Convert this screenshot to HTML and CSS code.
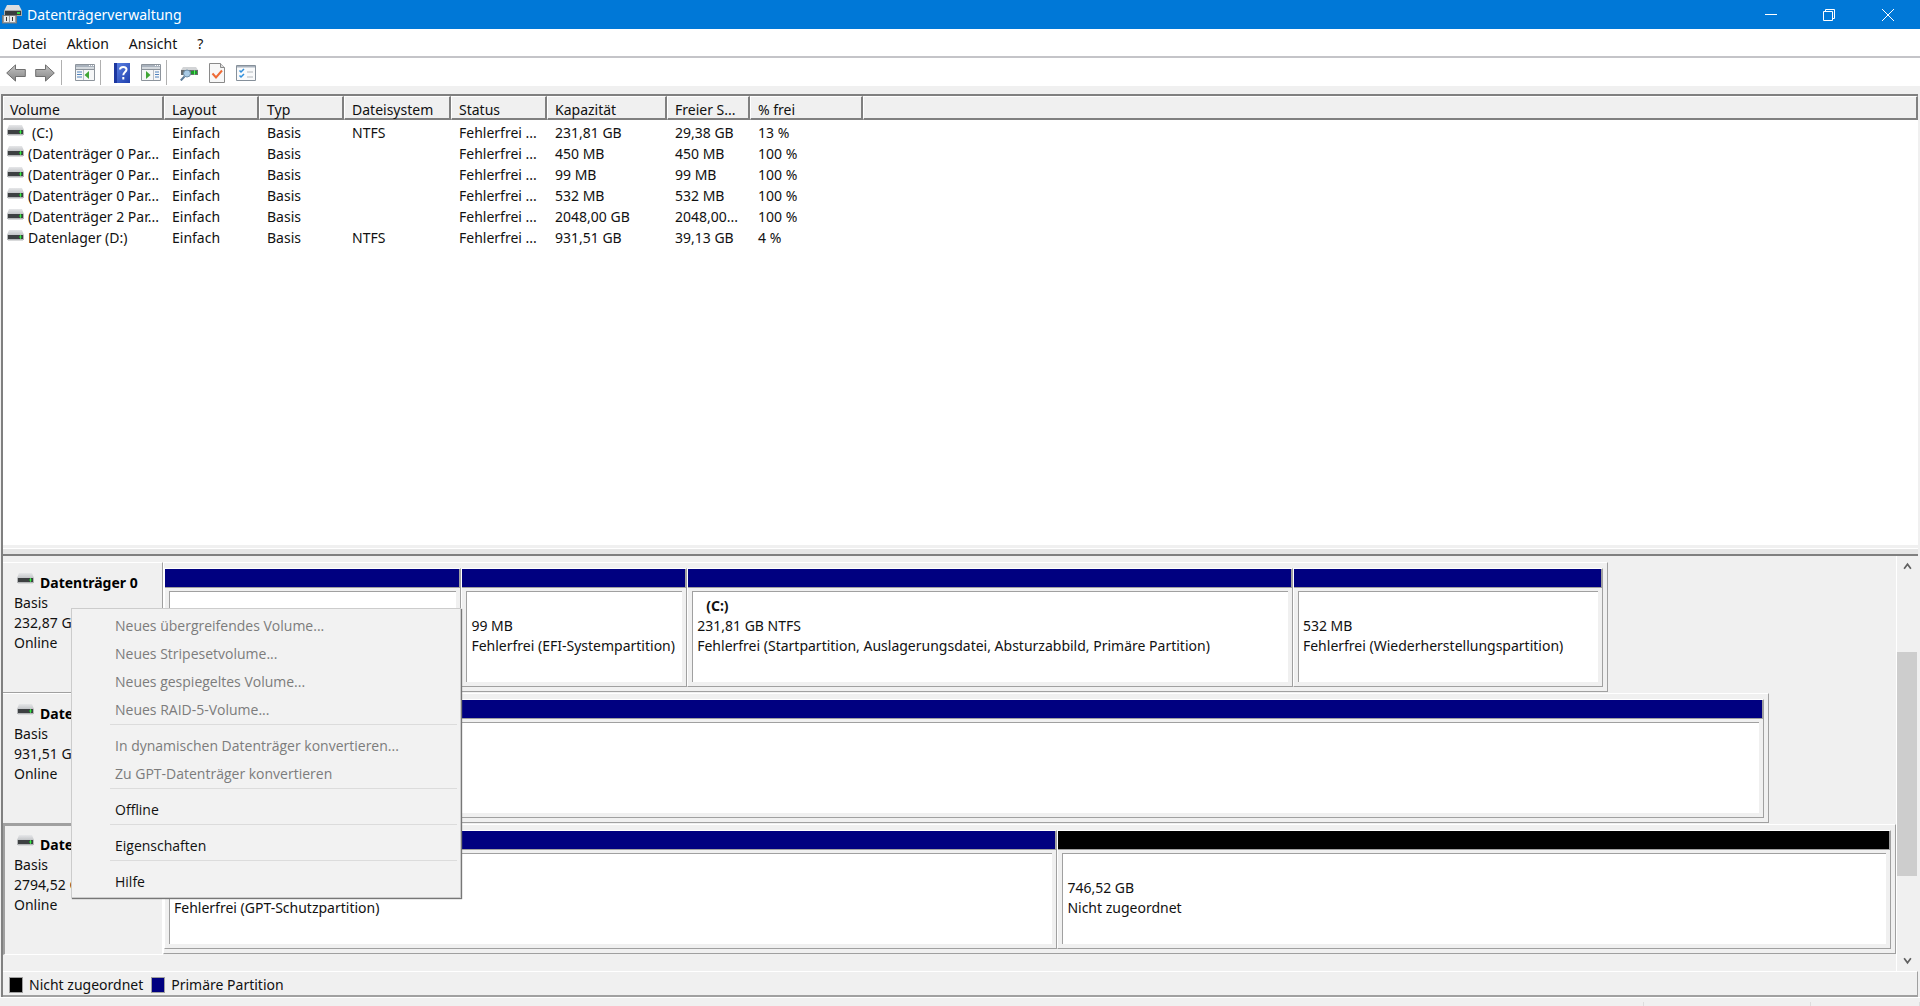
FILE: index.html
```html
<!DOCTYPE html>
<html lang="de">
<head>
<meta charset="utf-8">
<title>Datenträgerverwaltung</title>
<link rel="stylesheet" href="styles.css">
</head>
<body>
<svg class="sprite" aria-hidden="true">
  <defs>
    <linearGradient id="lid" x1="0" y1="0" x2="0" y2="1"><stop offset="0" stop-color="#e6e7e9"/><stop offset="1" stop-color="#c3c5c8"/></linearGradient>
    <linearGradient id="steel" x1="0" y1="0" x2="0" y2="1"><stop offset="0" stop-color="#c4c4c4"/><stop offset="1" stop-color="#858585"/></linearGradient>
    <linearGradient id="book" x1="0" y1="0" x2="1" y2="1"><stop offset="0" stop-color="#5f85e6"/><stop offset="1" stop-color="#1f3fae"/></linearGradient>
  </defs>
  <symbol id="drive" viewBox="0 0 17 12">
    <path d="M2 0h13l2 5H0z" fill="url(#lid)"/>
    <path d="M0 5h17v5H0z" fill="#b4b6b8"/>
    <path d="M1 5h15v4H1z" fill="#3d4042"/>
    <path d="M12 6h3v2h-3z" fill="#1f8f2a"/><path d="M13 5h1v4h-1z" fill="#3fe04a"/>
    <path d="M1 10h15v1H1z" fill="#d9dadb"/>
  </symbol>
  <symbol id="panel" viewBox="0 0 20 17">
    <path d="M.5.5h19v16H.5z" fill="#f6f7f8" stroke="#8d949c"/>
    <path d="M1 1h18v2H1z" fill="#a9b2bd"/><path d="M1 3h18v2H1z" fill="#d4d9de"/>
    <path d="M0 5h20v1H0z" fill="#8d949c"/>
    <path d="M14 1h1v1h-1zM16 1h1v1h-1zM18 1h1v1h-1z" fill="#fff"/>
  </symbol>
</svg>

<header class="titlebar">
  <svg class="app-icon" viewBox="0 0 20 19" aria-hidden="true">
    <path d="M5 0h12l3 6H2z" fill="#dcdee0"/><path d="M2 5h18v6H2z" fill="#a9acae"/>
    <path d="M3 6h16v4H3z" fill="#3a3d3f"/><path d="M15 7h3v2h-3z" fill="#35d63f"/>
    <path d="M0 10h15v8.500H0z" fill="#7c7c7c"/><path d="M1 11h13v7H1z" fill="#9b9b9b"/>
    <path d="M2 11h5v6H2zM8 11h5v6H8z" fill="#e9e9e9"/><path d="M4 12h1v4H4zM10 12h1v4h-1z" fill="#333"/>
  </svg>
  <h1>Datenträgerverwaltung</h1>
  <div class="window-buttons">
    <button type="button" aria-label="Minimieren"><svg viewBox="0 0 12 12"><path d="M0 5.500h12"/></svg></button>
    <button type="button" aria-label="Verkleinern"><svg viewBox="0 0 12 12"><path d="M.5 2.500h9v9h-9zM2.500 2.500v-2h9v9h-2"/></svg></button>
    <button type="button" aria-label="Schließen"><svg viewBox="0 0 12 12"><path d="M0 0l12 12M12 0L0 12"/></svg></button>
  </div>
</header>

<nav class="menubar">
  <button type="button">Datei</button>
  <button type="button">Aktion</button>
  <button type="button">Ansicht</button>
  <button type="button">?</button>
</nav>

<div class="toolbar" role="toolbar" aria-label="Symbolleiste">
  <div class="tools">
    <button type="button" aria-label="Zurück"><svg viewBox="0 0 20 18" width="20" height="18"><path d="M.7 9L9.500.9v4.600h9.800v7H9.500v4.600z" fill="url(#steel)" stroke="#6f6f6f"/></svg></button>
    <button type="button" aria-label="Vorwärts"><svg viewBox="0 0 20 18" width="20" height="18"><path d="M19.300 9L10.500.9v4.600H.7v7h9.800v4.600z" fill="url(#steel)" stroke="#6f6f6f"/></svg></button>
  </div>
  <div class="tools">
    <button type="button" aria-label="Konsolenstruktur"><svg viewBox="0 0 20 17" width="20" height="17"><use href="#panel"/><path d="M2 8h5M2 10.500h5M2 13h5" stroke="#4f82bd"/><path d="M8.500 6v10" stroke="#b8bec5"/><path d="M14 7v8l-4.500-4z" fill="#3fa535"/></svg></button>
  </div>
  <div class="tools">
    <button type="button" aria-label="Hilfe"><svg viewBox="0 0 16 20" width="16" height="20"><path d="M0 0h16v20H0z" fill="url(#book)"/><path d="M0 0h3v20H0z" fill="#1d37a0"/><path d="M6 6.500C6 3 12.500 3 12.500 6.500c0 2.500-3.200 2.600-3.200 5.700M9.300 14v2.500" fill="none" stroke="#fff" stroke-width="2"/></svg></button>
    <button type="button" aria-label="Aktionsbereich"><svg viewBox="0 0 20 17" width="20" height="17"><use href="#panel"/><path d="M14 8h4M14 10.500h4M14 13h4" stroke="#4f82bd"/><path d="M12.500 6v10" stroke="#b8bec5"/><path d="M5 7v8l4.500-4z" fill="#3fa535"/></svg></button>
  </div>
  <div class="tools">
    <button type="button" aria-label="Datenträger neu einlesen"><svg viewBox="0 0 18 16" width="18" height="16"><path d="M3 2h13l2 3H1z" fill="#d2d4d6"/><path d="M1 5h17v5H1z" fill="#6a6e70"/><path d="M11 6h6v3h-6z" fill="#1f9a2b"/><path d="M14 5h1v5h-1z" fill="#5bf066"/><circle cx="7" cy="8.500" r="3.500" fill="#a9cbe6" stroke="#6f8fa8"/><path d="M4.500 11.500L.8 15.500" stroke="#5e7d99" stroke-width="2"/></svg></button>
    <button type="button" aria-label="Eigenschaften"><svg viewBox="0 0 16 20" width="16" height="20"><path d="M.5.5h11l4 4v15H.5z" fill="#f7f7f7" stroke="#8a8a8a"/><path d="M11.500.5v4h4" fill="#ddd" stroke="#8a8a8a"/><path d="M3.500 10.500l3.500 4 6-7" fill="none" stroke="#ee6a35" stroke-width="2"/></svg></button>
    <button type="button" aria-label="Liste"><svg viewBox="0 0 20 16" width="20" height="16"><path d="M.5.5h19v15H.5z" fill="#f9fafb" stroke="#86909a"/><path d="M1 1h18v1.500H1z" fill="#a9b2bd"/><path d="M3.500 5.500l1.500 1.500 3-3M3.500 10.500L5 12l3-3" fill="none" stroke="#2f8fdc" stroke-width="1.500"/><path d="M11 7h6M11 12h6" stroke="#b1b6bb"/></svg></button>
  </div>
</div>

<main class="console">
  <section class="volumes">
    <table>
      <colgroup>
        <col class="c-volume"><col class="c-layout"><col class="c-type"><col class="c-fs"><col class="c-status"><col class="c-capacity"><col class="c-free"><col class="c-percent"><col>
      </colgroup>
      <thead>
        <tr><th>Volume</th><th>Layout</th><th>Typ</th><th>Dateisystem</th><th>Status</th><th>Kapazität</th><th>Freier S...</th><th>% frei</th><th></th></tr>
      </thead>
      <tbody>
        <tr><td><span class="name"><svg class="drive"><use href="#drive"/></svg><span class="indent">(C:)</span></span></td><td>Einfach</td><td>Basis</td><td>NTFS</td><td>Fehlerfrei ...</td><td>231,81 GB</td><td>29,38 GB</td><td>13 %</td><td></td></tr>
        <tr><td><span class="name"><svg class="drive"><use href="#drive"/></svg>(Datenträger 0 Par...</span></td><td>Einfach</td><td>Basis</td><td></td><td>Fehlerfrei ...</td><td>450 MB</td><td>450 MB</td><td>100 %</td><td></td></tr>
        <tr><td><span class="name"><svg class="drive"><use href="#drive"/></svg>(Datenträger 0 Par...</span></td><td>Einfach</td><td>Basis</td><td></td><td>Fehlerfrei ...</td><td>99 MB</td><td>99 MB</td><td>100 %</td><td></td></tr>
        <tr><td><span class="name"><svg class="drive"><use href="#drive"/></svg>(Datenträger 0 Par...</span></td><td>Einfach</td><td>Basis</td><td></td><td>Fehlerfrei ...</td><td>532 MB</td><td>532 MB</td><td>100 %</td><td></td></tr>
        <tr><td><span class="name"><svg class="drive"><use href="#drive"/></svg>(Datenträger 2 Par...</span></td><td>Einfach</td><td>Basis</td><td></td><td>Fehlerfrei ...</td><td>2048,00 GB</td><td>2048,00...</td><td>100 %</td><td></td></tr>
        <tr><td><span class="name"><svg class="drive"><use href="#drive"/></svg>Datenlager (D:)</span></td><td>Einfach</td><td>Basis</td><td>NTFS</td><td>Fehlerfrei ...</td><td>931,51 GB</td><td>39,13 GB</td><td>4 %</td><td></td></tr>
      </tbody>
    </table>
  </section>

  <div class="splitter"></div>

  <section class="graph">
    <div class="disks">
      <article class="disk">
        <div class="disk-label">
          <h2><svg class="drive"><use href="#drive"/></svg>Datenträger 0</h2>
          <p>Basis</p><p>232,87 GB</p><p>Online</p>
        </div>
        <div class="canvas">
          <div class="frame" style="width:83.4%">
            <div class="part" style="flex-grow:297"><div class="bar"></div><div class="box"></div></div>
            <div class="part" style="flex-grow:225"><div class="bar"></div><div class="box"><h3></h3><p>99 MB</p><p>Fehlerfrei (EFI-Systempartition)</p></div></div>
            <div class="part" style="flex-grow:607"><div class="bar"></div><div class="box"><h3>(C:)</h3><p>231,81 GB NTFS</p><p>Fehlerfrei (Startpartition, Auslagerungsdatei, Absturzabbild, Primäre Partition)</p></div></div>
            <div class="part" style="flex-grow:310"><div class="bar"></div><div class="box"><h3></h3><p>532 MB</p><p>Fehlerfrei (Wiederherstellungspartition)</p></div></div>
          </div>
        </div>
      </article>
      <article class="disk">
        <div class="disk-label">
          <h2><svg class="drive"><use href="#drive"/></svg>Datenträger 1</h2>
          <p>Basis</p><p>931,51 GB</p><p>Online</p>
        </div>
        <div class="canvas">
          <div class="frame" style="width:92.7%">
            <div class="part" style="flex-grow:1"><div class="bar"></div><div class="box"></div></div>
          </div>
        </div>
      </article>
      <article class="disk selected">
        <div class="disk-label">
          <h2><svg class="drive"><use href="#drive"/></svg>Datenträger 2</h2>
          <p>Basis</p><p>2794,52 GB</p><p>Online</p>
        </div>
        <div class="canvas">
          <div class="frame" style="width:100%">
            <div class="part" style="flex-grow:895"><div class="bar"></div><div class="box"><h3></h3><p></p><p>Fehlerfrei (GPT-Schutzpartition)</p></div></div>
            <div class="part" style="flex-grow:835"><div class="bar unallocated"></div><div class="box"><h3></h3><p>746,52 GB</p><p>Nicht zugeordnet</p></div></div>
          </div>
        </div>
      </article>
    </div>

    <div class="scrollbar">
      <button type="button" aria-label="Nach oben"><svg viewBox="0 0 8 8"><path d="M1 6l3-4 3 4"/></svg></button>
      <div class="track"><div class="thumb"></div></div>
      <button type="button" aria-label="Nach unten"><svg viewBox="0 0 8 8"><path d="M1 2l3 4 3-4"/></svg></button>
    </div>

    <div class="context-menu" role="menu">
      <button type="button" role="menuitem" disabled>Neues übergreifendes Volume...</button>
      <button type="button" role="menuitem" disabled>Neues Stripesetvolume...</button>
      <button type="button" role="menuitem" disabled>Neues gespiegeltes Volume...</button>
      <button type="button" role="menuitem" disabled>Neues RAID-5-Volume...</button>
      <hr>
      <button type="button" role="menuitem" disabled>In dynamischen Datenträger konvertieren...</button>
      <button type="button" role="menuitem" disabled>Zu GPT-Datenträger konvertieren</button>
      <hr>
      <button type="button" role="menuitem">Offline</button>
      <hr>
      <button type="button" role="menuitem">Eigenschaften</button>
      <hr>
      <button type="button" role="menuitem">Hilfe</button>
    </div>
  </section>

  <div class="legend">
    <span class="key"><i class="swatch unallocated"></i>Nicht zugeordnet</span>
    <span class="key"><i class="swatch"></i>Primäre Partition</span>
  </div>
</main>

<footer class="statusbar"><span></span><span></span><span></span></footer>
</body>
</html>
```
FILE: styles.css
```css
:root {
  --face: #f0f0f0;
  --line: #a0a0a0;
  --edge: #808080;
  --primary: #000080;
}

* {
  box-sizing: border-box;
}

body {
  display: flex;
  flex-direction: column;
  min-height: 100vh;
  margin: 0;
  background: var(--face);
  color: #111;
  font: 14px/20px "Noto Sans", "Open Sans", sans-serif;
}

h1, h2, h3, p {
  margin: 0;
  font-size: 14px;
}

button {
  padding: 0;
  border: 0;
  background: none;
  color: inherit;
  font: inherit;
}

svg {
  display: block;
}

.sprite {
  position: absolute;
  width: 0;
  height: 0;
}

.drive {
  flex: none;
  width: 17px;
  height: 12px;
}

/* Title bar */
.titlebar {
  display: flex;
  align-items: center;
  height: 29px;
  padding: 0 2px;
  background: #0078d7;
  color: #fff;
}

.app-icon {
  width: 20px;
  height: 19px;
}

.titlebar h1 {
  flex: 1;
  margin-left: 5px;
  font-weight: 400;
}

.window-buttons {
  display: flex;
}

.window-buttons button {
  display: flex;
  align-items: center;
  justify-content: center;
  width: 58px;
  height: 29px;
}

.window-buttons button:last-child {
  width: 60px;
}

.window-buttons svg {
  width: 12px;
  height: 12px;
  fill: none;
  stroke: #fff;
}

/* Menu and tool bars */
.menubar {
  display: flex;
  gap: 20px;
  height: 29px;
  padding: 2px 0 0 12px;
  border-bottom: 2px solid #c4c4c8;
  background: #fff;
}

.toolbar {
  display: flex;
  height: 28px;
  background: #fff;
}

.tools {
  display: flex;
  align-items: center;
  gap: 11px;
  margin: 2px 0 1px;
  padding: 0 5px 0 13px;
  border-right: 1px solid #b0b0b0;
}

.tools:first-child {
  gap: 9px;
  padding: 0 6px;
}

.tools:last-child {
  border-right: 0;
}

/* Console frame */
.console {
  display: flex;
  flex: 1;
  flex-direction: column;
  margin: 8px 2px 0 1px;
  border: solid var(--edge);
  border-width: 2px 0 0 2px;
}

.volumes {
  flex: 1;
  background: #fff;
}

table {
  width: 100%;
  border-collapse: separate;
  border-spacing: 0;
  table-layout: fixed;
}

.c-volume { width: 161px; }
.c-layout { width: 95px; }
.c-type { width: 85px; }
.c-fs { width: 107px; }
.c-status { width: 96px; }
.c-capacity { width: 120px; }
.c-free { width: 83px; }
.c-percent { width: 113px; }

th {
  height: 24px;
  padding: 4px 0 0 7px;
  border: solid #fff;
  border-color: #fff var(--edge) var(--edge) #fff;
  border-width: 1px 2px 2px 1px;
  background: var(--face);
  font-weight: 400;
  line-height: 16px;
  text-align: left;
  white-space: nowrap;
}

th:first-child {
  padding-left: 6px;
}

td {
  height: 21px;
  padding: 0 0 0 8px;
  line-height: 21px;
  white-space: nowrap;
}

tbody tr:first-child td {
  height: 23px;
  padding-top: 2px;
}

td:first-child {
  padding-left: 4px;
}

.name {
  display: flex;
  gap: 4px;
}

.name .drive {
  margin-top: 3px;
}

.indent {
  padding-left: 4px;
}

.splitter {
  height: 11px;
  border-top: 3px solid var(--face);
  border-bottom: 2px solid var(--edge);
  background: #e6e6e6;
  box-shadow: inset 0 1px #fff;
}

/* Graphical view */
.graph {
  position: relative;
  display: flex;
}

.disks {
  flex: 1;
  padding: 6px 0 16px;
}

.disk {
  display: flex;
  height: 131px;
}

.disk-label {
  flex: none;
  width: 160px;
  padding: 10px 0 0 11px;
  border: solid var(--line);
  border-top-color: #fff;
  border-width: 1px 1px 1px 0;
}

.disk-label h2 {
  display: flex;
  gap: 6px;
  padding-left: 3px;
  color: #000;
}

.selected .disk-label {
  padding: 9px 0 0 9px;
  border-color: var(--line) #fff #fff var(--line);
  border-width: 2px 1px 1px 2px;
}

.canvas {
  flex: 1;
  min-width: 0;
}

.frame {
  display: flex;
  height: 130px;
  padding: 5px 4px 4px 0;
  border: solid var(--line);
  border-color: #fff var(--line) var(--line) #fff;
  border-width: 1px;
}

.part {
  display: flex;
  flex: 1 1 0;
  flex-direction: column;
  min-width: 0;
  border: solid var(--line);
  border-color: #fff var(--line) var(--line) #fff;
  border-width: 1px;
}

.bar {
  height: 19px;
  border-right: 1px solid var(--line);
  border-bottom: 1px solid var(--line);
  background: var(--primary);
}

.unallocated {
  background: #000;
}

.box {
  flex: 1;
  overflow: hidden;
  margin: 3px 4px 4px;
  padding: 4px 0 0 4px;
  border: solid var(--line);
  border-width: 1px 0 0 1px;
  background: #fff;
  white-space: nowrap;
}

.box h3,
.box p {
  height: 20px;
}

.box h3 {
  padding-left: 9px;
}

/* Scroll bar */
.scrollbar {
  display: flex;
  flex-direction: column;
  width: 22px;
  padding-right: 1px;
  border-left: 1px solid #fff;
}

.scrollbar button {
  display: flex;
  align-items: center;
  justify-content: center;
  height: 21px;
}

.scrollbar svg {
  width: 9px;
  height: 9px;
  fill: none;
  stroke: #606060;
}

.scrollbar path {
  stroke-width: 1.5;
}

.track {
  flex: 1;
  padding-top: 75px;
}

.thumb {
  height: 224px;
  background: #cdcdcd;
}

/* Context menu */
.context-menu {
  position: absolute;
  top: 52px;
  left: 68px;
  display: flex;
  flex-direction: column;
  width: 390px;
  padding: 3px 3px 1px 38px;
  border: 1px solid #ccc;
  background: #f2f2f2;
  box-shadow: 1px 1px 1px #777;
  font-family: "Open Sans", "Noto Sans", sans-serif;
}

.context-menu button {
  height: 28px;
  padding-left: 5px;
  line-height: 28px;
  text-align: left;
}

.context-menu button:disabled {
  color: #7c7c7c;
}

.context-menu hr {
  width: 100%;
  height: 8px;
  margin: 0;
  border: 0;
  border-top: 1px solid #dcdcdc;
}

/* Legend and status bar */
.legend {
  display: flex;
  gap: 8px;
  height: 26px;
  padding: 2px 0 0 6px;
  border: solid var(--line);
  border-top-color: #fff;
  border-width: 1px 1px 2px 0;
}

.key {
  display: flex;
  align-items: center;
  gap: 6px;
}

.swatch {
  width: 14px;
  height: 16px;
  border: 1px solid var(--line);
  background: var(--primary);
}

.swatch.unallocated {
  background: #000;
}

.statusbar {
  display: flex;
  height: 9px;
  border-top: 1px solid #fff;
}

.statusbar span {
  flex: 108;
  margin-top: 4px;
  border-right: 1px solid #ddd;
}

.statusbar span:first-child {
  flex: 1645;
}

.statusbar span:nth-child(2) {
  flex: 166;
}
```
